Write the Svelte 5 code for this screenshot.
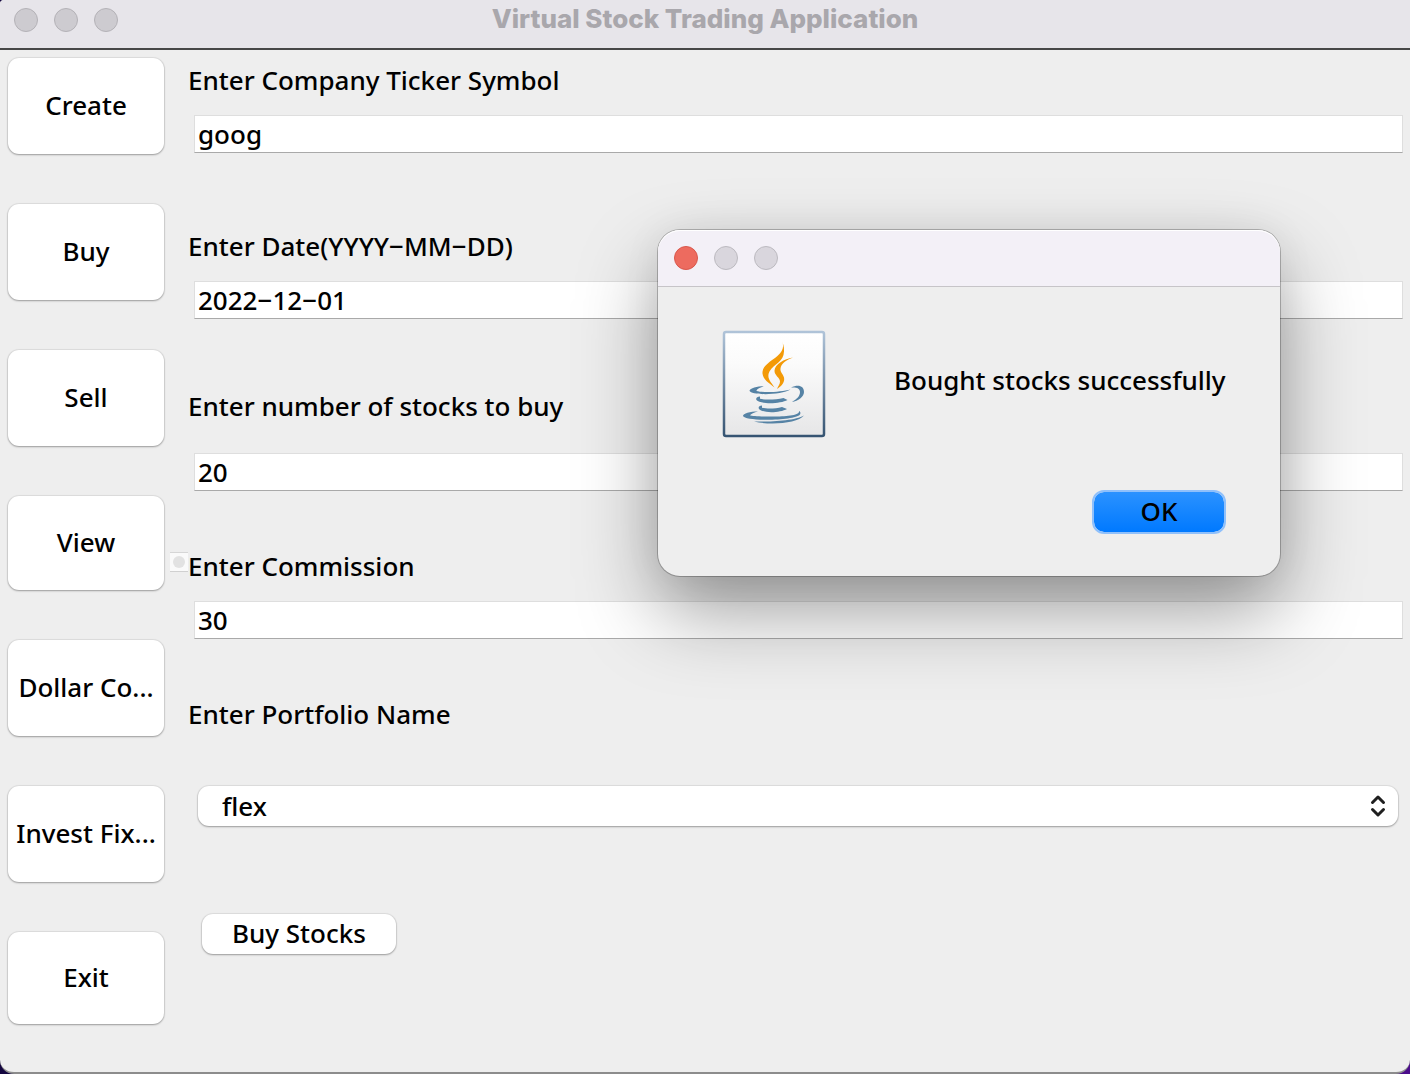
<script>
  const actions = ['Create', 'Buy', 'Sell', 'View', 'Dollar Co...', 'Invest Fix...', 'Exit'];
  let ticker = $state('goog');
  let date = $state('2022−12−01');
  let count = $state('20');
  let commission = $state('30');
  let portfolio = $state('flex');
</script>

<div class="window">
  <header class="titlebar">
    <div class="lights">
      <span class="light"></span>
      <span class="light"></span>
      <span class="light"></span>
    </div>
    <h1>Virtual Stock Trading Application</h1>
    <div></div>
  </header>

  <div class="body">
    <nav class="sidebar">
      {#each actions as action}
        <button type="button" class="push">{action}</button>
      {/each}
    </nav>

    <div class="divider"><span class="grip"></span></div>

    <main class="form">
      <div class="field first">
        <label for="ticker">Enter Company Ticker Symbol</label>
        <input id="ticker" type="text" bind:value={ticker} />
      </div>
      <div class="field second">
        <label for="date">Enter Date(YYYY−MM−DD)</label>
        <input id="date" type="text" bind:value={date} />
      </div>
      <div class="field third">
        <label for="count">Enter number of stocks to buy</label>
        <input id="count" type="text" bind:value={count} />
      </div>
      <div class="field fourth">
        <label for="commission">Enter Commission</label>
        <input id="commission" type="text" bind:value={commission} />
      </div>
      <div class="field fifth">
        <label for="portfolio">Enter Portfolio Name</label>
        <div class="combo">
          <select id="portfolio" bind:value={portfolio}>
            <option value="flex">flex</option>
          </select>
          <svg width="16" height="24" viewBox="0 0 16 24" aria-hidden="true">
            <path d="M2.500 8.500L8 3l5.500 5.500M2.500 15.500L8 21l5.500-5.500" />
          </svg>
        </div>
      </div>
      <button type="button" class="push submit">Buy Stocks</button>
    </main>
  </div>

  <div class="dialog" role="dialog" aria-labelledby="message">
    <div class="dialog-bar">
      <button type="button" class="light close" aria-label="Close"></button>
      <span class="light"></span>
      <span class="light"></span>
    </div>
    <div class="dialog-content">
      <svg class="java" width="104" height="108" viewBox="0 0 104 108" aria-hidden="true">
        <defs>
          <linearGradient id="face" x1="0" y1="0" x2="0" y2="1">
            <stop offset="0" stop-color="#ffffff" />
            <stop offset="0.300" stop-color="#fbfbfb" />
            <stop offset="1" stop-color="#e6e6e7" />
          </linearGradient>
          <linearGradient id="edge" x1="0" y1="0" x2="0" y2="1">
            <stop offset="0" stop-color="#afc3d8" />
            <stop offset="1" stop-color="#365472" />
          </linearGradient>
        </defs>
        <rect x="2" y="2" width="100" height="104" rx="2" fill="url(#face)" stroke="url(#edge)" stroke-width="2.500" />
        <g fill="#f39a07">
          <path d="M60 11c3.500 8-2 13-7 17-7 5-13 9-12.500 15.500.5 6 6 9 12 14-3-5-7-8-6-13.500 2-8 13-11 15-19 1.200-5 .5-9.500-1.500-14z" />
          <path d="M71 27.500c-9 1.500-18 6.500-18.500 13-.3 5 5.500 7 5.500 11 0 3-2 4.500-3 7.500 5-3 8-7 7-11.500-1-4-4-5-3.500-9 .5-5 6-8.500 12.500-11z" />
        </g>
        <g fill="#5683a5">
          <path d="M42 56.200c-7 0-14 2-14.500 4.500 2 5 32 4.500 41-1.200-9 2.500-27 3.500-34 1.500 0-2 4-3.800 7.500-4.800z" />
          <path d="M69 57.500c7-3.500 13-2 13 4.500 0 5-6 9-12 10 5-3 8-6 8-10 0-4-4-5-9-4.500z" />
          <path d="M38 66.500c-3 0-4.500 2-3.500 3.500 4 4.500 24 4 31 0l-4-2c-8 2-19 2-23.500.8z" />
          <path d="M40 75.500c-3 0-4 2-3 3.500 4 4.500 21 4 28 0l-5-2c-7 2-15 2-20 .8z" />
          <path d="M36 81.500c-8 0-15 2-15 4.500 2 5.500 52 5 57-1.500 1-2 0-3-1-3.500 1 4.500-14 5.500-26 5.500-10 0-21 0-23-1.200 1-1.500 4-3 8-3.800z" />
          <path d="M32 91.500c16 4 44 2 50-6-9 5.500-36 6.500-50 6z" />
        </g>
      </svg>
      <p id="message">Bought stocks successfully</p>
    </div>
    <div class="dialog-actions">
      <button type="button" class="ok">OK</button>
    </div>
  </div>
</div>

<style>
  :global(body) {
    margin: 0;
    background: linear-gradient(90deg, #14063f, #4b0d8c);
  }

  .window,
  .window button,
  .window input,
  .window select {
    font-family: 'Noto Sans', 'Lucida Grande', sans-serif;
    font-size: 26px;
    font-weight: 500;
    line-height: 38px;
    color: #000;
  }

  .window {
    position: relative;
    box-sizing: border-box;
    min-height: 100vh;
    overflow: hidden;
    background: #eeeeee;
    border-bottom: 2px solid #8c8c8c;
    border-radius: 4px 0 14px 14px;
  }

  .titlebar {
    display: grid;
    grid-template-columns: 1fr auto 1fr;
    align-items: center;
    height: 50px;
    box-sizing: border-box;
    padding: 0 14px 8px;
    background: #e7e5ea;
    border-bottom: 2px solid #474747;
  }

  h1 {
    margin: 0;
    padding-bottom: 2px;
    font-family: Inter, sans-serif;
    font-size: 26px;
    font-weight: 800;
    line-height: 36px;
    color: #a9a7ac;
  }

  .lights,
  .dialog-bar {
    display: flex;
    align-items: center;
    gap: 16px;
  }

  .light {
    box-sizing: border-box;
    width: 24px;
    height: 24px;
    padding: 0;
    border: 1px solid #b4b2b7;
    border-radius: 50%;
    background: #cdcbd0;
  }

  .body {
    display: flex;
    padding: 8px 7px 48px 8px;
  }

  .sidebar {
    display: grid;
    flex: none;
    width: 156px;
    grid-template-rows: 96px 96px 96px 94px 96px 96px 92px;
    gap: 50px;
  }

  .push {
    padding: 0 0 3px;
    border: 0;
    border-radius: 11px;
    background: #fff;
    box-shadow: 0 0 1px 1px rgba(0, 0, 0, 0.07), 0 1px 2px rgba(0, 0, 0, 0.3);
    white-space: nowrap;
  }

  .divider {
    flex: none;
    width: 18px;
    margin-left: 6px;
    padding-top: 494px;
  }

  .grip {
    display: grid;
    place-items: center;
    height: 18px;
    border-top: 1px solid #d6d6d6;
    border-bottom: 1px solid #d0d0d0;
    background: #fafafa;
  }

  .grip::before {
    content: '';
    width: 12px;
    height: 12px;
    border-radius: 50%;
    background: #e2e2e2;
  }

  .form {
    flex: 1;
    min-width: 0;
    padding-top: 3px;
  }

  .field {
    display: flex;
    flex-direction: column;
    gap: 16px;
  }

  .first {
    margin-bottom: 74px;
  }

  .second {
    margin-bottom: 68px;
  }

  .third {
    gap: 28px;
    margin-bottom: 56px;
  }

  .fourth {
    margin-bottom: 56px;
  }

  .fifth {
    gap: 53px;
    margin-bottom: 88px;
  }

  input {
    box-sizing: border-box;
    height: 38px;
    margin: 0 0 0 6px;
    padding: 0 3px;
    border: 1px solid #dedede;
    border-bottom: 1px solid #a9a9a9;
    border-radius: 0;
    background: #fff;
    outline: 0;
  }

  .combo {
    display: grid;
    grid-template-columns: 1fr 28px;
    align-items: center;
    margin: 0 5px 0 10px;
    border-radius: 11px;
    background: #fff;
    box-shadow: 0 0 1px 1px rgba(0, 0, 0, 0.07), 0 1px 2px rgba(0, 0, 0, 0.3);
  }

  select {
    grid-area: 1 / 1 / 2 / 3;
    height: 40px;
    padding: 0 24px;
    border: 0;
    background: transparent;
    appearance: none;
  }

  .combo svg {
    grid-area: 1 / 2 / 2 / 3;
    pointer-events: none;
  }

  .combo path {
    fill: none;
    stroke: #1f1f1f;
    stroke-width: 3;
    stroke-linecap: round;
    stroke-linejoin: round;
  }

  .submit {
    height: 40px;
    margin-left: 14px;
    padding: 0 30px 4px;
  }

  .dialog {
    position: absolute;
    top: 230px;
    right: 130px;
    width: 622px;
    border-radius: 22px;
    background: #eeeeee;
    box-shadow: 0 0 0 1px rgba(0, 0, 0, 0.24), 0 36px 80px rgba(0, 0, 0, 0.38), 0 0 40px rgba(0, 0, 0, 0.06);
  }

  .dialog-bar {
    height: 56px;
    padding: 0 16px;
    border-bottom: 1px solid #c6c4c8;
    border-radius: 22px 22px 0 0;
    background: #f3f0f7;
    box-shadow: inset 0 1px 0 #fff;
  }

  .dialog-bar .light {
    background: #d9d6dd;
    border-color: #bcbac0;
  }

  .dialog-bar .close {
    background: #ed6b5f;
    border-color: #d9574c;
  }

  .dialog-content {
    display: flex;
    align-items: center;
    gap: 68px;
    padding: 43px 40px 0 64px;
  }

  .dialog-content p {
    margin: 0 0 8px;
    white-space: nowrap;
  }

  .dialog-actions {
    display: flex;
    justify-content: flex-end;
    padding: 52px 54px 42px;
  }

  .ok {
    box-sizing: border-box;
    width: 134px;
    height: 44px;
    padding: 0 0 4px;
    border: 2px solid #8fc0fb;
    border-radius: 12px;
    background: linear-gradient(#2b92ff, #0079ff) padding-box;
  }
</style>
